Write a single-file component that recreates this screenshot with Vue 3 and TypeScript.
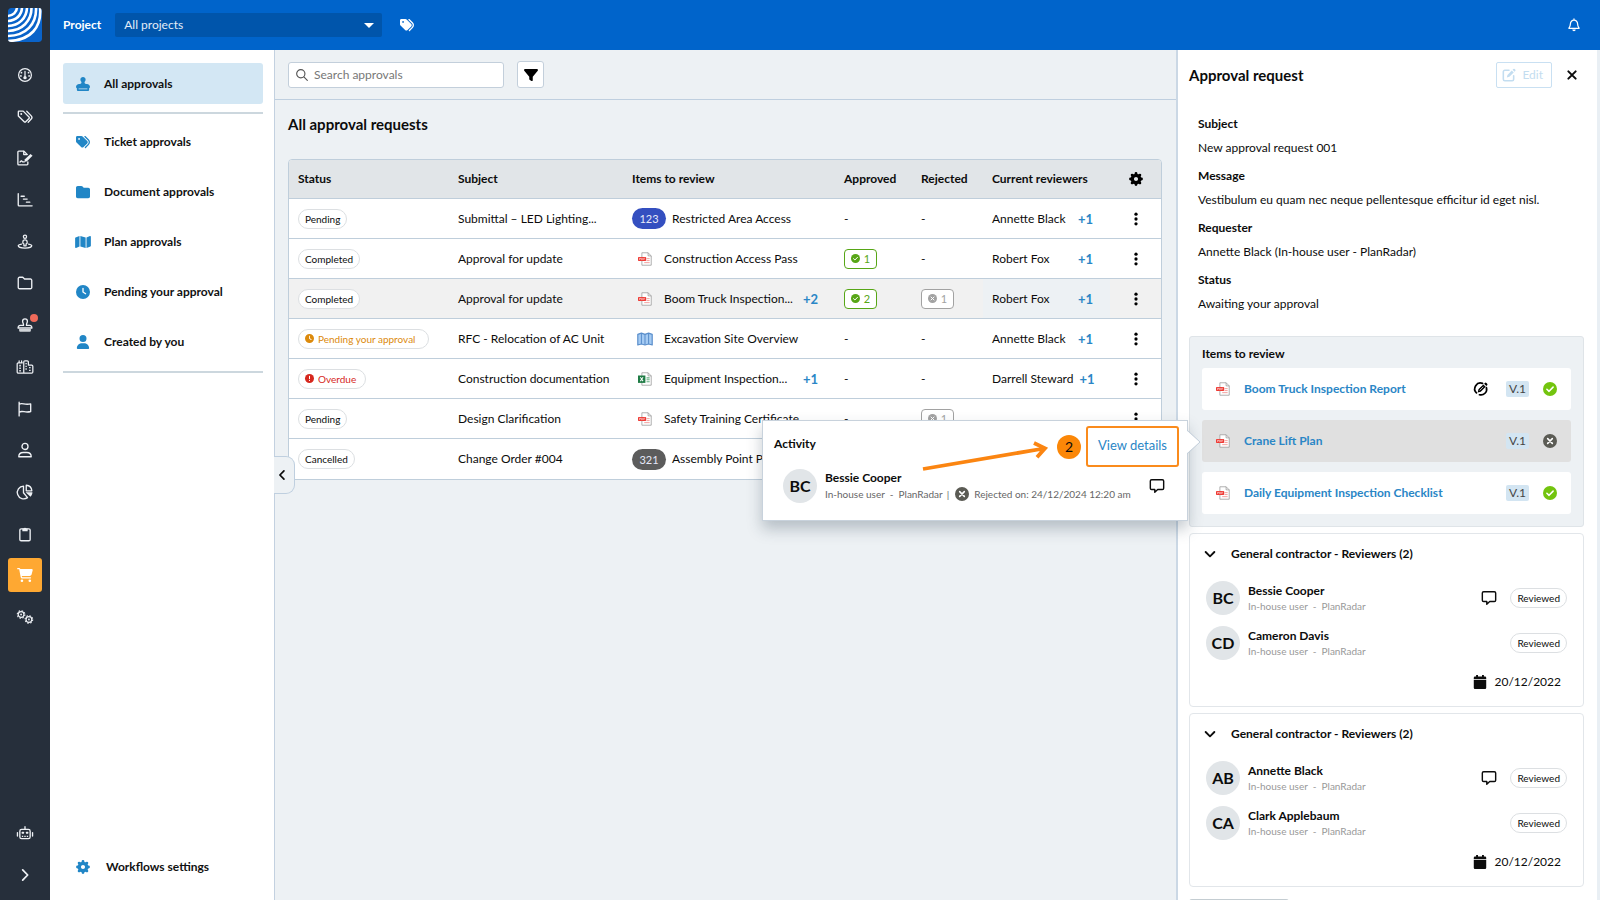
<script setup lang="ts">
import { ref } from 'vue'

interface Icon { box: string; body: string }
interface NavItem { icon: string; label: string }
interface ApprovalRow {
  status: string
  tone?: 'warn' | 'error'
  subject: string
  kind: 'pdf' | 'map' | 'xls' | 'blue' | 'grey'
  code?: string
  item: string
  more?: string
  approved?: number
  rejected?: number
  reviewer?: string
  others?: string
  hovered?: boolean
}
interface Person { initials: string; name: string; comment: boolean }

const line = 'fill="none" stroke="currentColor" stroke-linecap="round" stroke-linejoin="round"'
const pdfPage = '<path d="M5 1h8l4 4v12H5z" fill="#fff" stroke="#9a9a9a"/><path d="M13 1v4h4" fill="none" stroke="#9a9a9a"/>'

const icons: Record<string, Icon> = {
  gauge: { box: '0 0 18 18', body: `<g ${line} stroke-width="1.4"><circle cx="9" cy="9" r="7.2"/><path d="M9 5v5.5"/></g><circle cx="9" cy="12" r="1.9" fill="currentColor"/><g fill="currentColor"><circle cx="5" cy="6.4" r="1"/><circle cx="13" cy="6.4" r="1"/><circle cx="4.4" cy="10" r="1"/><circle cx="13.6" cy="10" r="1"/></g>` },
  tagsLine: { box: '0 0 18 18', body: `<g ${line} stroke-width="1.5"><path d="M1.5 3v4.8l6.6 6.6a1.2 1.2 0 0 0 1.7 0l3.7-3.7a1.2 1.2 0 0 0 0-1.7L7 2.4H2.1a.6.6 0 0 0-.6.6z"/><path d="M11 2.6l5 5.1a2.6 2.6 0 0 1 0 3.6l-3.4 3.6"/></g><circle cx="4.8" cy="5.6" r="1.1" fill="currentColor"/>` },
  form: { box: '0 0 18 18', body: `<g ${line} stroke-width="1.5"><path d="M12.2 13.5v2.2a1 1 0 0 1-1 1H2a1 1 0 0 1-1-1V2.300a1 1 0 0 1 1-1h5.800l3.600 3.600"/><path d="M7.600 1.600v3.600h3.600M3.400 13.600l1.600-1.400 1.500 1.200h1.600"/></g><path d="M15.200 4.400l2.300 2.200-6.300 6.100-2.900.7.6-2.900z" fill="currentColor"/>` },
  gantt: { box: '0 0 18 18', body: `<g ${line} stroke-width="1.5"><path d="M1.400 2v12.600a1 1 0 0 0 1 1H17"/><path d="M4.600 4.800h3.600M7.200 8h4.200M10.600 11.400h3.800"/></g>` },
  person360: { box: '0 0 18 18', body: `<g ${line} stroke-width="1.4"><circle cx="9" cy="3" r="1.800"/><path d="M9 6.600c-1.600 0-2.400.9-2.400 2.300v1.600l1.200.8v2h2.400v-2l1.200-.8V8.900c0-1.400-.8-2.300-2.400-2.300z"/><path d="M5 11.300c-2.100.4-3.600 1.100-3.600 2 0 1.300 3.400 2.600 7.600 2.600s7.600-1.300 7.600-2.600c0-.9-1.500-1.600-3.600-2"/></g>` },
  folderLine: { box: '0 0 18 18', body: `<path d="M1.400 14V4a1.500 1.500 0 0 1 1.500-1.500h3.600l2 2h6.600A1.500 1.500 0 0 1 16.600 6v8a1.500 1.500 0 0 1-1.500 1.500H2.900A1.500 1.500 0 0 1 1.400 14z" ${line} stroke-width="1.500"/>` },
  stampLine: { box: '0 0 18 18', body: `<g ${line} stroke-width="1.5"><path d="M7.300 9.400c.3-2-1-2.800-1-4.600a2.700 2.700 0 0 1 5.400 0c0 1.800-1.300 2.600-1 4.600h3.500a2.500 2.500 0 0 1 2.500 3H1.300a2.500 2.500 0 0 1 2.500-3z"/></g><path d="M2.400 13.600h13.200v1.800a1.200 1.200 0 0 1-1.200 1.200H3.600a1.200 1.200 0 0 1-1.200-1.200z" fill="currentColor" opacity=".85"/>` },
  city: { box: '0 0 20 18', body: `<g ${line} stroke-width="1.400"><path d="M8 15.800H2.500a1.300 1.300 0 0 1-1.300-1.300V5.600a1.300 1.300 0 0 1 1.300-1.300H7M3.400 4V2M6.200 4V2"/><path d="M8.600 15.800V3.300A1.300 1.300 0 0 1 9.900 2h2.600a1.300 1.300 0 0 1 1.300 1.300v3.500h3.700a1.300 1.300 0 0 1 1.300 1.300v6.400a1.300 1.300 0 0 1-1.300 1.300z"/></g><g fill="currentColor"><path d="M3.600 6.600h1.700v1.700H3.600zM3.600 9.500h1.700v1.700H3.600zM3.600 12.400h1.700v1.700H3.600zM10.500 4.500h1.500V6h-1.500zM10.500 7.500h1.500V9h-1.500zM10.500 10.500h1.500V12h-1.500zM14.600 9h1.700v1.500h-1.700zM14.600 12h1.700v1.500h-1.700z"/></g>` },
  flag: { box: '0 0 18 18', body: `<path d="M2.400 1.400v15.400M2.400 3.500c4-1.800 6 1.400 13 -.3v8.600c-6.500 2-8.500-1.500-13 .6" ${line} stroke-width="1.500"/>` },
  userLine: { box: '0 0 18 18', body: `<g ${line} stroke-width="1.500"><circle cx="9" cy="5" r="3.400"/><path d="M2 16.600c0-3 2-4.800 5-4.800h4c3 0 5 1.800 5 4.800z"/></g>` },
  pie: { box: '0 0 18 18', body: `<g ${line} stroke-width="1.500"><path d="M7.300 2.300a7.200 7.200 0 1 0 4.500 13L7.300 9.800z"/><path d="M10.400 1.400v6.300h6.300c-.2-3.500-2.800-6.100-6.300-6.300z"/></g><path d="M9.600 9.400h7.800c-.1 2-.9 3.700-2.200 5z" fill="currentColor"/>` },
  clipboard: { box: '0 0 18 18', body: `<rect x="3.200" y="3.200" width="11.600" height="13.400" rx="1.400" ${line} stroke-width="1.500"/><path d="M6 2.800h1.600a1.500 1.500 0 0 1 2.800 0H12v3.200H6z" fill="currentColor"/>` },
  cart: { box: '0 0 576 512', body: '<path fill="currentColor" d="M0 24C0 10.700 10.700 0 24 0H69.500c22 0 41.500 12.800 50.600 32h411c26.300 0 45.500 25 38.600 50.400l-41 152.300c-8.500 31.400-37 53.300-69.500 53.300H170.700l5.400 28.500c2.200 11.300 12.100 19.500 23.600 19.500H488c13.300 0 24 10.700 24 24s-10.700 24-24 24H199.700c-34.600 0-64.300-24.600-70.700-58.500L77.400 54.500c-.7-3.800-4-6.500-7.900-6.500H24C10.700 48 0 37.300 0 24zM128 464a48 48 0 1 1 96 0 48 48 0 1 1-96 0zm336-48a48 48 0 1 1 0 96 48 48 0 1 1 0-96z"/>' },
  cogs: { box: '0 0 18 18', body: `<g fill="none" stroke="currentColor"><circle cx="4.600" cy="6.200" r="3.200" stroke-width="1.300"/><circle cx="4.600" cy="6.200" r="4.300" stroke-width="1.200" stroke-dasharray="1.700 1.677"/><circle cx="13.400" cy="11.800" r="3.200" stroke-width="1.300"/><circle cx="13.400" cy="11.800" r="4.300" stroke-width="1.200" stroke-dasharray="1.700 1.677"/></g><circle cx="4.600" cy="6.200" r="1" fill="currentColor"/><circle cx="13.400" cy="11.800" r="1" fill="currentColor"/>` },
  robot: { box: '0 0 20 18', body: `<g ${line} stroke-width="1.500"><rect x="4.200" y="5" width="11.600" height="10.400" rx="2"/><path d="M10 5V2M1.500 8.500v4M18.500 8.500v4"/></g><g fill="currentColor"><rect x="6.300" y="7.500" width="2.600" height="2.400" rx=".6"/><rect x="11.100" y="7.500" width="2.600" height="2.400" rx=".6"/><path d="M6.500 12h1.500v1.500H6.500zM9.200 12h1.600v1.500H9.200zM12 12h1.500v1.500H12z"/></g>` },
  chevronRight: { box: '0 0 18 18', body: `<path d="M6.400 3.200L12 9l-5.600 5.800" ${line} stroke-width="2"/>` },
  chevronLeft: { box: '0 0 18 18', body: `<path d="M11.500 3.600L6.300 9l5.200 5.400" ${line} stroke-width="2.200"/>` },
  chevronDown: { box: '0 0 18 18', body: `<path d="M3.400 6.400L9 12l5.600-5.600" ${line} stroke-width="2.400"/>` },
  tags: { box: '0 0 512 512', body: '<path fill="currentColor" d="M345 39.100L472.800 168.400c52.400 53 52.400 138.200 0 191.200L360.800 472.900c-9.300 9.400-24.500 9.500-33.900 .2s-9.500-24.500-.2-33.900L438.600 325.900c33.900-34.300 33.900-89.400 0-123.700L310.900 72.900c-9.300-9.400-9.200-24.600 .2-33.900s24.600-9.200 33.900 .2zM0 229.500V80C0 53.500 21.500 32 48 32H197.500c17 0 33.300 6.700 45.300 18.700l168 168c25 25 25 65.500 0 90.500L277.300 442.700c-25 25-65.500 25-90.500 0l-168-168C6.700 262.700 0 246.500 0 229.500zM144 144a32 32 0 1 0-64 0 32 32 0 1 0 64 0z"/>' },
  folder: { box: '0 0 512 512', body: '<path fill="currentColor" d="M64 480H448c35.300 0 64-28.700 64-64V160c0-35.300-28.700-64-64-64H288c-10.100 0-19.600-4.700-25.600-12.800L243.200 57.600C231.100 41.500 212.100 32 192 32H64C28.700 32 0 60.700 0 96V416c0 35.300 28.700 64 64 64z"/>' },
  map: { box: '32 0 512 512', body: '<path fill="currentColor" d="M384 476.100L192 421.200V35.900L384 90.800V476.100zm32-1.200V88.400L543.100 37.500c15.800-6.300 32.900 5.300 32.900 22.300V394.600c0 9.800-6 18.600-15.100 22.300L416 474.800zM15.100 95.100L160 37.200V423.600L32.900 474.500C17.100 480.800 0 469.200 0 452.200V117.400c0-9.800 6-18.600 15.100-22.300z"/>' },
  clock: { box: '0 0 512 512', body: '<path fill="currentColor" d="M256 0a256 256 0 1 1 0 512A256 256 0 1 1 256 0zM232 120V256c0 8 4 15.500 10.700 20l96 64c11 7.400 25.900 4.400 33.300-6.700s4.400-25.900-6.700-33.300L280 243.200V120c0-13.300-10.700-24-24-24s-24 10.700-24 24z"/>' },
  user: { box: '0 0 512 512', body: '<path fill="currentColor" d="M256 256A128 128 0 1 0 256 0a128 128 0 1 0 0 256zm-45.700 48C111.800 304 32 383.800 32 482.300C32 498.700 45.300 512 61.700 512H450.300c16.400 0 29.700-13.300 29.700-29.700C480 383.800 400.200 304 301.700 304H210.300z"/>' },
  stamp: { box: '0 0 512 512', body: '<path fill="currentColor" d="M312 201.800c0-17.400 9.200-33.200 19.900-47C344.500 138.500 352 118.100 352 96c0-53-43-96-96-96s-96 43-96 96c0 22.100 7.500 42.500 20.100 58.800c10.700 13.800 19.900 29.600 19.900 47c0 29.900-24.300 54.200-54.200 54.200H112C50.100 256 0 306.100 0 368c0 20.900 13.400 38.700 32 45.300V464c0 26.500 21.500 48 48 48H432c26.500 0 48-21.500 48-48V413.300c18.600-6.600 32-24.400 32-45.300c0-61.900-50.100-112-112-112H366.200c-29.900 0-54.200-24.300-54.200-54.200zM416 416v32H96V416H416z"/>' },
  gear: { box: '0 0 18 18', body: '<circle cx="9" cy="9" r="4.800" fill="none" stroke="currentColor" stroke-width="4.200"/><path d="M9 1.900v2.500M9 13.600v2.500M1.900 9h2.500M13.600 9h2.500M4 4l1.600 1.600M12.400 12.400L14 14M14 4l-1.600 1.600M5.600 12.400L4 14" fill="none" stroke="currentColor" stroke-width="3.600" stroke-linecap="round"/>' },
  filter: { box: '0 0 512 512', body: '<path fill="currentColor" d="M3.900 54.900C10.500 40.900 24.500 32 40 32H472c15.500 0 29.500 8.900 36.100 22.900s4.600 30.500-5.200 42.500L320 320.900V448c0 12.100-6.800 23.200-17.700 28.600s-23.800 4.300-33.500-3l-64-48c-8.100-6-12.800-15.500-12.800-25.600V320.900L9 97.300C-.7 85.400-2.800 68.800 3.900 54.900z"/>' },
  search: { box: '0 0 18 18', body: `<g ${line} stroke-width="1.700"><circle cx="7.200" cy="7.200" r="6.200"/><path d="M11.800 11.800l5.200 5.200"/></g>` },
  bell: { box: '0 0 18 18', body: `<g ${line} stroke-width="1.600"><path d="M9 2.800a4.600 4.600 0 0 0-4.600 4.700c0 3-1 4.300-2 5.700h13.200c-1-1.400-2-2.700-2-5.700A4.600 4.600 0 0 0 9 2.800zM9 1.200v1.400"/></g><path d="M6.800 14.800h4.400a2.200 2.200 0 0 1-4.400 0z" fill="currentColor"/>` },
  edit: { box: '0 0 18 18', body: `<path d="M9 3H3.600A1.900 1.900 0 0 0 1.700 4.900v9.500a1.900 1.900 0 0 0 1.900 1.900h9.500a1.900 1.900 0 0 0 1.900-1.900V10" ${line} stroke-width="2"/><path d="M6.200 12.200l.8-3.300 5.600-5.600 2.500 2.500-5.600 5.600zM13.600 2.300l.9-.9a1.400 1.400 0 0 1 2 0l.5.5a1.400 1.400 0 0 1 0 2l-.9.9z" fill="currentColor"/>` },
  close: { box: '0 0 18 18', body: `<path d="M4.300 4.300l9.400 9.400M13.700 4.300l-9.400 9.400" ${line} stroke-width="2.600"/>` },
  dots: { box: '0 0 18 18', body: '<g fill="currentColor"><circle cx="9" cy="2.800" r="2.100"/><circle cx="9" cy="9" r="2.100"/><circle cx="9" cy="15.200" r="2.100"/></g>' },
  check: { box: '0 0 18 18', body: '<circle cx="9" cy="9" r="9" fill="currentColor"/><path d="M5 9.300l2.800 2.700L13 6.600" fill="none" stroke="#fff" stroke-width="2" stroke-linecap="round" stroke-linejoin="round"/>' },
  cross: { box: '0 0 18 18', body: '<circle cx="9" cy="9" r="9" fill="currentColor"/><path d="M6 6l6 6M12 6l-6 6" fill="none" stroke="#fff" stroke-width="2" stroke-linecap="round"/>' },
  alert: { box: '0 0 18 18', body: '<circle cx="9" cy="9" r="9" fill="currentColor"/><path d="M9 4.500v5M9 12.800v.3" fill="none" stroke="#fff" stroke-width="2" stroke-linecap="round"/>' },
  editRound: { box: '0 0 18 18', body: `<path d="M11 1.800A7.400 7.400 0 0 0 3.200 14M7 16.400A7.400 7.400 0 0 0 16 7.300" ${line} stroke-width="2.200"/><path d="M4.800 13.400l.9-4 6.300-6.300 3 3-6.300 6.300zM13 2.200l1-1a1.400 1.400 0 0 1 2 0l.9.900a1.400 1.400 0 0 1 0 2l-1 1z" fill="currentColor"/><path d="M7.300 10.800l4.700-4.700" stroke="#fff" stroke-width="1"/>` },
  comment: { box: '0 0 18 18', body: `<path d="M3 2h12a1.500 1.500 0 0 1 1.500 1.500v8A1.500 1.500 0 0 1 15 13h-5.200L6.500 16v-3H3a1.500 1.500 0 0 1-1.500-1.500v-8A1.500 1.500 0 0 1 3 2z" ${line} stroke-width="1.600"/>` },
  calendar: { box: '0 0 18 18', body: '<path d="M4 0h2.400v2H11.600V0H14v2h1.500A1.500 1.500 0 0 1 17 3.500V5H1V3.500A1.500 1.500 0 0 1 2.500 2H4zM1 6.200h16v10.300a1.500 1.500 0 0 1-1.500 1.500h-13A1.500 1.500 0 0 1 1 16.500z" fill="currentColor"/>' },
  pdf: { box: '0 0 18 18', body: `${pdfPage}<path d="M11 8.500h4M11 11h4M8 13.700h7" stroke="#f08a86"/><rect x="0" y="6.500" width="10.500" height="5" rx="1" fill="#ee3a34"/><path d="M2 10.200V8h1.300v1H2M4.600 8v2h.9l.6-1-.6-1zM7.300 10.200V8h1.500M7.300 9h1.200" fill="none" stroke="#fff" stroke-width=".6"/>` },
  xls: { box: '0 0 18 18', body: `${pdfPage}<path d="M11 7.500h4M11 10h4M11 12.500h4" stroke="#63ad80" stroke-width="1.400"/><rect x="0" y="4.500" width="9.500" height="9.500" fill="#1f7c45"/><path d="M3 6.800l3.500 4.900M6.500 6.800L3 11.700" stroke="#fff" stroke-width="1.300"/>` },
  plan: { box: '0 0 20 18', body: '<path d="M1 3.200l4.500-1.500 4.500 1.500 4.500-1.500L19 3.200v13.300l-4.500-1.200-4.500 1.200-4.500-1.200L1 16.500z" fill="#a5cbf3" stroke="#5a8ecb" stroke-width="1.500" stroke-linejoin="round"/><path d="M5.500 1.700v13.600M10 3.200v13.300M14.500 1.700v13.600" stroke="#5a8ecb" stroke-width="1.300"/>' },
}

const rail: NavItem[] = [
  { icon: 'gauge', label: 'Dashboard' },
  { icon: 'tagsLine', label: 'Tickets' },
  { icon: 'form', label: 'Forms' },
  { icon: 'gantt', label: 'Schedule' },
  { icon: 'person360', label: 'SiteView' },
  { icon: 'folderLine', label: 'Documents' },
  { icon: 'stampLine', label: 'Approvals' },
  { icon: 'city', label: 'Projects' },
  { icon: 'flag', label: 'Reports' },
  { icon: 'userLine', label: 'Users' },
  { icon: 'pie', label: 'Statistics' },
  { icon: 'clipboard', label: 'Templates' },
  { icon: 'cart', label: 'Shop' },
  { icon: 'cogs', label: 'Settings' },
]
const filters: NavItem[] = [
  { icon: 'tags', label: 'Ticket approvals' },
  { icon: 'folder', label: 'Document approvals' },
  { icon: 'map', label: 'Plan approvals' },
  { icon: 'clock', label: 'Pending your approval' },
  { icon: 'user', label: 'Created by you' },
]
const rows: ApprovalRow[] = [
  { status: 'Pending', subject: 'Submittal – LED Lighting...', kind: 'blue', code: '123', item: 'Restricted Area Access', reviewer: 'Annette Black', others: '+1' },
  { status: 'Completed', subject: 'Approval for update', kind: 'pdf', item: 'Construction Access Pass', approved: 1, reviewer: 'Robert Fox', others: '+1' },
  { status: 'Completed', subject: 'Approval for update', kind: 'pdf', item: 'Boom Truck Inspection...', more: '+2', approved: 2, rejected: 1, reviewer: 'Robert Fox', others: '+1', hovered: true },
  { status: 'Pending your approval', tone: 'warn', subject: 'RFC - Relocation of AC Unit', kind: 'map', item: 'Excavation Site Overview', reviewer: 'Annette Black', others: '+1' },
  { status: 'Overdue', tone: 'error', subject: 'Construction documentation', kind: 'xls', item: 'Equipment Inspection...', more: '+1', reviewer: 'Darrell Steward', others: '+1' },
  { status: 'Pending', subject: 'Design Clarification', kind: 'pdf', item: 'Safety Training Certificate', rejected: 1 },
  { status: 'Cancelled', subject: 'Change Order #004', kind: 'grey', code: '321', item: 'Assembly Point Photo' },
]
const details = [
  { term: 'Subject', value: 'New approval request 001' },
  { term: 'Message', value: 'Vestibulum eu quam nec neque pellentesque efficitur id eget nisl.' },
  { term: 'Requester', value: 'Annette Black (In-house user - PlanRadar)' },
  { term: 'Status', value: 'Awaiting your approval' },
]
const items = [
  { name: 'Boom Truck Inspection Report', approved: true, editable: true, open: false },
  { name: 'Crane Lift Plan', approved: false, editable: false, open: true },
  { name: 'Daily Equipment Inspection Checklist', approved: true, editable: false, open: false },
]
const groups: Person[][] = [
  [
    { initials: 'BC', name: 'Bessie Cooper', comment: true },
    { initials: 'CD', name: 'Cameron Davis', comment: false },
  ],
  [
    { initials: 'AB', name: 'Annette Black', comment: true },
    { initials: 'CA', name: 'Clark Applebaum', comment: false },
  ],
]
const fileIcon: Record<string, string> = { pdf: 'pdf', map: 'plan', xls: 'xls' }
const project = ref('all')
const query = ref('')
</script>

<template>
  <div class="app">
    <nav class="rail" aria-label="Main">
      <a class="logo" href="#" aria-label="Home">
        <svg viewBox="0 0 34 34">
          <rect width="34" height="34" rx="3" fill="#0a63c9" />
          <g fill="none" stroke="#fff" stroke-width="2.600">
            <path d="M9 -1C9 4 5 8 -1 8M14 -1C14 7 8 13 -1 13M19 -1C19 10 11 18 -1 18M23.500 -1C24 13 14 23 -1 23M28 -1C29 16 18 28 -1 28M32 -1C34 19 23 33 -1 33" />
          </g>
        </svg>
      </a>
      <div class="rail-list">
        <button v-for="item in rail" :key="item.icon" type="button" class="rail-btn" :class="{ shop: item.icon === 'cart' }" :aria-label="item.label">
          <svg :viewBox="icons[item.icon].box" v-html="icons[item.icon].body"></svg>
          <i v-if="item.icon === 'stampLine'" class="dot"></i>
        </button>
      </div>
      <div class="rail-foot">
        <button type="button" class="rail-btn" aria-label="Assistant"><svg :viewBox="icons.robot.box" v-html="icons.robot.body"></svg></button>
        <button type="button" class="rail-btn" aria-label="Expand"><svg :viewBox="icons.chevronRight.box" v-html="icons.chevronRight.body"></svg></button>
      </div>
    </nav>

    <div class="shell">
      <header class="topbar">
        <label class="project-label" for="project">Project</label>
        <div class="project-box">
          <select id="project" v-model="project" class="project">
            <option value="all">All projects</option>
          </select>
        </div>
        <button type="button" class="plain" aria-label="Tags"><svg class="i14" :viewBox="icons.tags.box" v-html="icons.tags.body"></svg></button>
        <button type="button" class="plain bell" aria-label="Notifications"><svg class="i14" :viewBox="icons.bell.box" v-html="icons.bell.body"></svg></button>
      </header>

      <div class="body">
        <aside class="side">
          <a href="#" class="side-link current"><svg class="i14" :viewBox="icons.stamp.box" v-html="icons.stamp.body"></svg>All approvals</a>
          <div class="side-group">
            <a v-for="f in filters" :key="f.label" href="#" class="side-link"><svg class="i14" :viewBox="icons[f.icon].box" v-html="icons[f.icon].body"></svg>{{ f.label }}</a>
          </div>
          <a href="#" class="side-link settings"><svg class="i14" :viewBox="icons.gear.box" v-html="icons.gear.body"></svg>Workflows settings</a>
          <button type="button" class="collapse" aria-label="Collapse"><svg class="i14" :viewBox="icons.chevronLeft.box" v-html="icons.chevronLeft.body"></svg></button>
        </aside>

        <main class="main">
          <div class="toolbar">
            <label class="search">
              <svg class="i12" :viewBox="icons.search.box" v-html="icons.search.body"></svg>
              <input v-model="query" type="text" placeholder="Search approvals" aria-label="Search approvals" />
            </label>
            <button type="button" class="filter" aria-label="Filter"><svg class="i14" :viewBox="icons.filter.box" v-html="icons.filter.body"></svg></button>
          </div>
          <div class="content">
            <h1>All approval requests</h1>
            <div class="table-box">
              <table>
                <colgroup>
                  <col class="c-status" /><col class="c-subject" /><col /><col class="c-approved" /><col class="c-rejected" /><col class="c-reviewer" /><col class="c-menu" />
                </colgroup>
                <thead>
                  <tr>
                    <th>Status</th><th>Subject</th><th>Items to review</th><th>Approved</th><th>Rejected</th><th>Current reviewers</th>
                    <th class="menu"><button type="button" class="plain" aria-label="Columns"><svg class="i14" :viewBox="icons.gear.box" v-html="icons.gear.body"></svg></button></th>
                  </tr>
                </thead>
                <tbody>
                  <tr v-for="(row, i) in rows" :key="i" :class="{ hovered: row.hovered }">
                    <td>
                      <div class="cell">
                        <span class="pill" :class="row.tone"><svg v-if="row.tone" class="i9" :viewBox="icons[row.tone === 'warn' ? 'clock' : 'alert'].box" v-html="icons[row.tone === 'warn' ? 'clock' : 'alert'].body"></svg>{{ row.status }}</span>
                      </div>
                    </td>
                    <td>{{ row.subject }}</td>
                    <td>
                      <div class="cell">
                        <span v-if="row.code" class="code" :class="row.kind">{{ row.code }}</span>
                        <span v-else class="file"><svg :class="row.kind === 'map' ? 'i16' : 'i14'" :viewBox="icons[fileIcon[row.kind]].box" v-html="icons[fileIcon[row.kind]].body"></svg></span>
                        <span>{{ row.item }}</span>
                        <a v-if="row.more" href="#" class="more">{{ row.more }}</a>
                      </div>
                    </td>
                    <td>
                      <div v-if="row.approved" class="count yes"><svg class="i9" :viewBox="icons.check.box" v-html="icons.check.body"></svg>{{ row.approved }}</div>
                      <template v-else>-</template>
                    </td>
                    <td>
                      <div v-if="row.rejected" class="count no"><svg class="i9" :viewBox="icons.cross.box" v-html="icons.cross.body"></svg>{{ row.rejected }}</div>
                      <template v-else>-</template>
                    </td>
                    <td class="reviewer">
                      <div class="cell"><span>{{ row.reviewer }}</span><a v-if="row.others" href="#" class="more">{{ row.others }}</a></div>
                    </td>
                    <td class="menu"><button type="button" class="plain" aria-label="Row menu"><svg class="i14" :viewBox="icons.dots.box" v-html="icons.dots.body"></svg></button></td>
                  </tr>
                </tbody>
              </table>
            </div>
          </div>
        </main>

        <aside class="panel">
          <div class="panel-head">
            <h2>Approval request</h2>
            <button type="button" class="edit" disabled><svg class="i14" :viewBox="icons.edit.box" v-html="icons.edit.body"></svg>Edit</button>
            <button type="button" class="plain" aria-label="Close"><svg class="i14" :viewBox="icons.close.box" v-html="icons.close.body"></svg></button>
          </div>
          <dl class="details">
            <template v-for="d in details" :key="d.term"><dt>{{ d.term }}</dt><dd>{{ d.value }}</dd></template>
          </dl>

          <section class="review">
            <h3>Items to review</h3>
            <ul>
              <li v-for="item in items" :key="item.name" class="item" :class="{ open: item.open }">
                <svg class="i14" :viewBox="icons.pdf.box" v-html="icons.pdf.body"></svg>
                <a href="#" class="item-name">{{ item.name }}</a>
                <svg v-if="item.editable" class="i14 sign" :viewBox="icons.editRound.box" v-html="icons.editRound.body"></svg>
                <span class="version">V.1</span>
                <svg class="i14" :class="item.approved ? 'ok' : 'bad'" :viewBox="icons[item.approved ? 'check' : 'cross'].box" v-html="icons[item.approved ? 'check' : 'cross'].body"></svg>

                <div v-if="item.open" class="popover">
                  <div class="pop-head">
                    <h4>Activity</h4>
                    <span class="step">2</span>
                    <button type="button" class="view">View details</button>
                  </div>
                  <div class="person">
                    <span class="avatar">BC</span>
                    <div class="who">
                      <strong>Bessie Cooper</strong>
                      <span class="meta">In-house user<i>-</i>PlanRadar<b>|</b><svg class="i14" :viewBox="icons.cross.box" v-html="icons.cross.body"></svg>Rejected on: 24/12/2024 12:20 am</span>
                    </div>
                    <button type="button" class="plain" aria-label="Comment"><svg class="i16" :viewBox="icons.comment.box" v-html="icons.comment.body"></svg></button>
                  </div>
                  <svg class="arrow" viewBox="0 0 126 28"><path d="M1 26L122 5.500M112 0l11 5.300-8 9" fill="none" stroke="#fb8511" stroke-width="3.800" /></svg>
                  <svg class="caret" viewBox="0 0 14 24"><path d="M-1 0L13 12L-1 24z" fill="#fff" /><path d="M0 0L13 12L0 24" fill="none" stroke="#c3cfdb" /></svg>
                </div>
              </li>
            </ul>
          </section>

          <section v-for="(group, g) in groups" :key="g" class="group">
            <h3><button type="button" class="toggle"><svg class="i14" :viewBox="icons.chevronDown.box" v-html="icons.chevronDown.body"></svg>General contractor - Reviewers (2)</button></h3>
            <div v-for="p in group" :key="p.name" class="person">
              <span class="avatar">{{ p.initials }}</span>
              <div class="who">
                <strong>{{ p.name }}</strong>
                <span class="meta">In-house user<i>-</i>PlanRadar</span>
              </div>
              <button v-if="p.comment" type="button" class="plain" aria-label="Comment"><svg class="i16" :viewBox="icons.comment.box" v-html="icons.comment.body"></svg></button>
              <span class="pill">Reviewed</span>
            </div>
            <p class="date"><svg class="i14" :viewBox="icons.calendar.box" v-html="icons.calendar.body"></svg>20/12/2022</p>
          </section>
          <div class="footer-btn"></div>
        </aside>
      </div>
    </div>
  </div>
</template>

<style>
html, body { margin: 0; height: 100%; overflow: hidden; }
</style>

<style scoped>
* { box-sizing: border-box; }
.app { display: flex; height: 100vh; overflow: hidden; font-family: Lato, "Liberation Sans", sans-serif; font-size: 12px; line-height: 18px; color: #0c0c0c; background: #edf1f4; }
button, input, select { font: inherit; color: inherit; }
button { cursor: pointer; }
a { text-decoration: none; color: inherit; }
h1, h2, h3, h4, p, dl, dd, ul { margin: 0; padding: 0; }
svg { display: block; flex: none; overflow: visible; }
.i9 { width: 9px; height: 9px; }
.i12 { width: 12px; height: 12px; }
.i14 { width: 14px; height: 14px; }
.i16 { width: 16px; height: 16px; }
.plain { display: flex; padding: 0; border: 0; background: none; }

.rail { flex: none; width: 50px; display: flex; flex-direction: column; align-items: center; padding: 8px 0; background: #262f3b; color: #eef1f5; }
.logo { width: 34px; height: 34px; overflow: hidden; border-radius: 3px; }
.logo svg { width: 34px; height: 34px; overflow: hidden; }
.rail-list { display: flex; flex-direction: column; justify-content: space-between; height: 576px; margin-top: 16px; }
.rail-btn { position: relative; display: flex; align-items: center; justify-content: center; width: 34px; height: 34px; padding: 0; border: 0; border-radius: 3px; background: none; }
.rail-btn svg { width: 18px; height: 16px; }
.rail-btn.shop { background: #fea832; color: #fff; }
.rail-btn.shop svg { height: 14px; }
.dot { position: absolute; right: 4px; top: 6px; width: 8px; height: 8px; border-radius: 50%; background: #ef6a5a; }
.rail-foot { display: flex; flex-direction: column; gap: 8px; margin-top: auto; }

.shell { flex: 1; min-width: 0; display: flex; flex-direction: column; }
.topbar { flex: none; display: flex; align-items: center; height: 50px; padding: 0 19px 0 13px; background: #0064cb; color: #fff; }
.project-label { font-weight: 700; }
.project-box { position: relative; width: 267px; margin: 0 18px 0 14px; }
.project-box::after { content: ""; position: absolute; right: 8px; top: 10px; border: 5px solid transparent; border-top-color: #fff; border-bottom: 0; }
.project { display: block; width: 100%; height: 24px; padding: 0 9px; border: 0; border-radius: 2px; background: #0055ab; color: #e3edf8; appearance: none; }
.bell { margin-left: auto; }

.body { flex: 1; min-height: 0; display: flex; }
.side { position: relative; flex: none; width: 225px; display: flex; flex-direction: column; padding: 13px 11px 12px 13px; background: #fff; border-right: 1px solid #c3d1e0; }
.side-link { display: flex; align-items: center; gap: 14px; height: 50px; padding-left: 13px; font-weight: 700; color: #111; }
.side-link svg { color: #2186c6; }
.side-link.current { height: 41px; border-radius: 3px; background: #d3e7f4; }
.side-group { margin-top: 8px; padding: 3px 0 4px; border: solid #ccd7de; border-width: 2px 0; }
.settings { margin-top: auto; height: 42px; gap: 16px; }
.collapse { position: absolute; left: 100%; top: 406px; z-index: 2; display: flex; align-items: center; justify-content: center; width: 21px; height: 38px; padding: 0 4px 0 0; border: 1px solid #bfcfdf; border-left: 0; border-radius: 0 9px 9px 0; background: #edf1f4; }

.main { flex: 1; min-width: 0; }
.toolbar { display: flex; align-items: center; gap: 13px; height: 50px; padding: 0 13px; border-bottom: 1px solid #bfcfdf; }
.search { display: flex; align-items: center; gap: 6px; width: 216px; height: 26px; padding: 0 7px; border: 1px solid #c3cfdb; border-radius: 3px; background: #fff; color: #555; }
.search input { flex: 1; min-width: 0; padding: 0; border: 0; outline: 0; background: none; }
.search input::placeholder { color: #777; opacity: 1; }
.filter { display: flex; align-items: center; justify-content: center; width: 27px; height: 27px; padding: 0; border: 1px solid #c3cfdb; border-radius: 3px; background: #fff; color: #000; }
.content { padding: 12px 14px 0 13px; }
h1, h2 { font-size: 15px; line-height: 24px; font-weight: 700; }
.table-box { margin-top: 23px; border: 1px solid #bfcedb; border-radius: 4px; overflow: hidden; background: #fff; }
table { width: 100%; table-layout: fixed; border-spacing: 0; }
.c-status { width: 160px; }
.c-subject { width: 174px; }
.c-approved { width: 77px; }
.c-rejected { width: 71px; }
.c-reviewer { width: 127px; }
.c-menu { width: 51px; }
th { height: 39px; padding: 0 0 0 9px; background: #e1e5e8; border-bottom: 1px solid #bfcedb; text-align: left; font-weight: 700; white-space: nowrap; }
td { height: 40px; padding: 0 0 0 9px; border-bottom: 1px solid #bfcedb; white-space: nowrap; }
tbody tr:last-child td { border-bottom: 0; }
.menu { padding: 0; }
.menu .plain { margin: 0 auto; color: #000; }
.hovered td { background: #f1f1f1; }
.hovered .reviewer { background: #edf1f4; }
.cell { display: flex; align-items: center; gap: 6px; padding-right: 17px; }
.more { margin-left: auto; font-size: 13px; font-weight: 700; color: #2a86c6; }
.file { display: flex; justify-content: center; width: 26px; }
.code { width: 34px; height: 21px; border-radius: 11px; font-size: 11px; line-height: 21px; text-align: center; color: #e6e9f8; }
.code.blue { background: #344fc0; }
.code.grey { background: #5c5c5c; }
.pill { display: inline-flex; align-items: center; gap: 4px; height: 20px; padding: 0 6px; border: 1px solid #dcdfe2; border-radius: 10px; background: #fff; font-size: 10px; line-height: 18px; white-space: nowrap; }
.pill.warn { padding-right: 13px; color: #dc8a0c; }
.pill.error { padding-right: 9px; color: #d6281e; }
.count { display: flex; align-items: center; justify-content: center; gap: 4px; width: 33px; height: 20px; border: 1px solid; border-radius: 4px; background: #fff; font-size: 11px; }
.yes { color: #57a616; }
.no { color: #a2a2a2; }

.panel { position: relative; flex: none; width: 424px; display: flex; flex-direction: column; padding: 12px 13px 0 11px; border-left: 2px solid #cbd8e5; border-right: 3px solid #e9eff4; background: #fff; }
.panel > * { flex: none; }
.panel-head { display: flex; align-items: center; padding: 0 5px 0 0; }
.panel-head h2 { margin-right: auto; }
.edit { display: flex; align-items: center; gap: 6px; height: 26px; margin-right: 13px; padding: 0 8px 0 5px; border: 1px solid #c9e0f2; border-radius: 2px; background: #fff; color: #c3ddf0; }
.details { padding: 26px 9px 0; }
dt { font-weight: 700; line-height: 20px; }
dd { line-height: 20px; padding: 4px 0 8px; }
h3, h4 { font-size: 12px; line-height: 18px; font-weight: 700; }
.review { margin-top: 14px; padding: 8px 12px 12px; border: 1px solid #dfe4e8; border-radius: 3px; background: #edf1f4; }
ul { display: flex; flex-direction: column; gap: 10px; margin-top: 5px; list-style: none; }
.item { position: relative; display: flex; align-items: center; height: 42px; padding: 0 14px; border-radius: 3px; background: #fff; }
.item.open { background: #e0e0e0; }
.item-name { margin: 0 auto 0 14px; font-weight: 700; color: #2a86c6; }
.sign { color: #000; margin-right: 18px; }
.version { width: 23px; height: 16px; margin-right: 14px; border-radius: 2px; background: #d3e5f2; line-height: 16px; text-align: center; color: #444; }
.ok { color: #73c40e; }
.bad { color: #5b5b54; }

.popover { position: absolute; z-index: 5; right: calc(100% + 14px); top: 0; width: 426px; height: 101px; padding: 5px 8px 0 11px; border: 1px solid #c8d2dc; background: #fff; box-shadow: 0 8px 14px rgba(40, 60, 80, .28); }
.pop-head { display: flex; align-items: center; }
.pop-head h4 { margin-right: auto; padding-bottom: 6px; }
.step { width: 24px; height: 24px; margin-right: 5px; border-radius: 50%; background: #fb8708; font-size: 14px; line-height: 24px; text-align: center; }
.view { height: 41px; padding: 0 10px 4px; border: 2px solid #fa8b1c; border-radius: 3px; background: none; font-size: 13px; color: #2a86c6; }
.arrow { position: absolute; left: 159px; top: 22px; width: 126px; height: 28px; }
.caret { position: absolute; left: 100%; top: 9px; width: 14px; height: 24px; }
.person { display: flex; align-items: center; gap: 8px; }
.avatar { flex: none; width: 34px; height: 34px; border-radius: 50%; background: #e1e5e8; font-size: 16px; line-height: 34px; text-align: center; font-weight: 700; }
.who { display: flex; flex-direction: column; margin-right: auto; white-space: nowrap; }
.who strong { line-height: 16px; }
.meta { display: flex; align-items: center; font-size: 10px; line-height: 14px; color: #999; }
.meta i { margin: 0 5px; font-style: normal; }
.popover .person { padding: 2px 14px 0 9px; }
.popover .meta { line-height: 16px; color: #666; }
.popover .meta b { margin: 0 6px 0 4px; font-weight: 400; }
.popover .meta svg { margin-right: 5px; color: #5b5b54; }

.group { margin-top: 6px; height: 174px; padding: 11px 16px 0; border: 1px solid #e2e6ea; border-radius: 4px; }
.toggle { display: flex; align-items: center; gap: 14px; padding: 0; margin-left: -3px; border: 0; background: none; font-weight: 700; line-height: 18px; }
.group .person { margin-top: 11px; }
.group h3 + .person { margin-top: 18px; }
.group .plain { margin-right: 5px; }
.date { display: flex; align-items: center; justify-content: flex-end; gap: 7px; margin: 13px 6px 0 0; }
.footer-btn { width: 100px; height: 26px; margin-top: 12px; border-radius: 3px; background: #c4cdd2; }
</style>
